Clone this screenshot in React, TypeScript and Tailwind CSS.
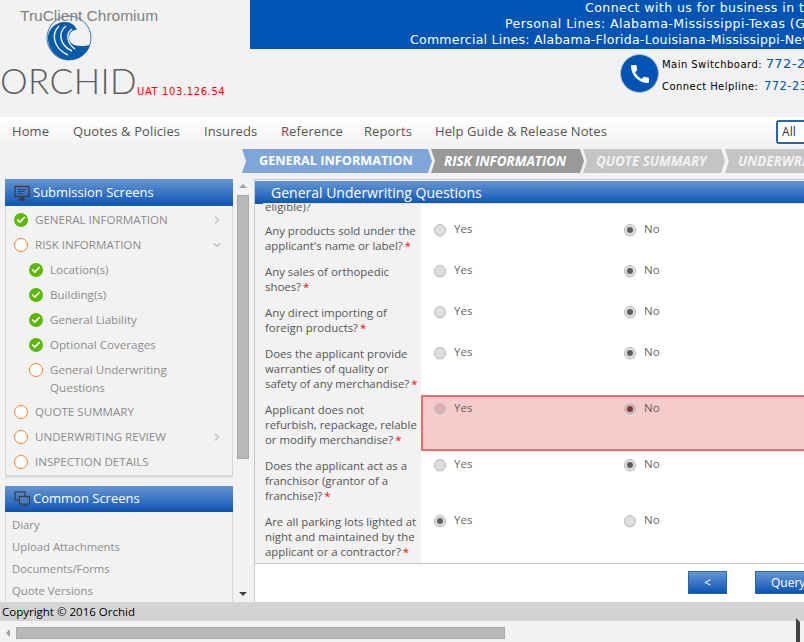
import { Check, ChevronRight, ChevronDown } from 'lucide-react';
import { MdCall } from 'react-icons/md';

const ui = "font-['Open_Sans','Noto_Sans',sans-serif]";
const verdana = "font-['DejaVu_Sans',sans-serif]";

const navItems = [
  { label: 'Home', cls: 'w-[61px]' },
  { label: 'Quotes & Policies', cls: 'w-[131px]' },
  { label: 'Insureds', cls: 'w-[77px]' },
  { label: 'Reference', cls: 'w-[83px]' },
  { label: 'Reports', cls: 'w-[71px]' },
  { label: 'Help Guide & Release Notes', cls: 'w-[172px]' },
];

type Question = { lines: string[]; value: 'yes' | 'no'; error?: boolean; h: string };

const questions: Question[] = [
  { lines: ["Any products sold under the", "applicant's name or label?"], value: 'no', h: 'h-[41px]' },
  { lines: ['Any sales of orthopedic', 'shoes?'], value: 'no', h: 'h-[41px]' },
  { lines: ['Any direct importing of', 'foreign products?'], value: 'no', h: 'h-[41px]' },
  { lines: ['Does the applicant provide', 'warranties of quality or', 'safety of any merchandise?'], value: 'no', h: 'h-[56px]' },
  { lines: ['Applicant does not', 'refurbish, repackage, relable', 'or modify merchandise?'], value: 'no', error: true, h: 'h-[56px]' },
  { lines: ['Does the applicant act as a', 'franchisor (grantor of a', 'franchise)?'], value: 'no', h: 'h-[56px]' },
  { lines: ['Are all parking lots lighted at', 'night and maintained by the', 'applicant or a contractor?'], value: 'yes', h: 'h-[56px]' },
];

function StatusDot({ done }: { done: boolean }) {
  if (done) {
    return (
      <span className="flex h-[14px] w-[14px] shrink-0 items-center justify-center rounded-full bg-[#5cb800]">
        <Check className="h-[10px] w-[10px] text-white" strokeWidth={4} />
      </span>
    );
  }
  return <span className="h-[14px] w-[14px] shrink-0 rounded-full border-[1.5px] border-[#f57f2a] bg-white" />;
}

function SideItem({ label, done, sub, arrow }: { label: string; done: boolean; sub?: boolean; arrow?: 'right' | 'down' }) {
  return (
    <div className={`flex h-[25px] items-center gap-[7px] pr-[9px] ${sub ? 'pl-[23px]' : 'pl-[8px]'}`}>
      <StatusDot done={done} />
      <span className="flex-1 whitespace-nowrap text-[11.6px] text-[#8c8c8c]">{label}</span>
      {arrow === 'right' && <ChevronRight className="h-[12px] w-[12px] text-[#c4c4c4]" strokeWidth={3} />}
      {arrow === 'down' && <ChevronDown className="h-[12px] w-[12px] text-[#c4c4c4]" strokeWidth={3} />}
    </div>
  );
}

function PanelHeader({ title, icon, h }: { title: string; icon: React.ReactNode; h: string }) {
  return (
    <div className={`flex items-center gap-[3px] bg-gradient-to-b from-[#6496d2] to-[#0554b4] pl-[9px] text-[13px] text-white ${h}`}>
      {icon}
      <span>{title}</span>
    </div>
  );
}

function Radio({ on, error }: { on: boolean; error?: boolean }) {
  return (
    <span className={`mt-[8px] flex h-[12px] w-[12px] shrink-0 items-center justify-center rounded-full border border-[#bdbdbd] shadow-[0_1px_1px_#e4e4e4] ${error ? 'bg-[#dcb0b0]' : 'bg-[#dedede]'}`}>
      {on && <span className={`h-[6px] w-[6px] rounded-full ${error ? 'bg-[#6e4040]' : 'bg-[#5e5e5e]'}`} />}
    </span>
  );
}

function Choice({ label, on, error }: { label: string; on: boolean; error?: boolean }) {
  return (
    <div className="flex w-[190px] shrink-0 gap-[8px]">
      <Radio on={on} error={error} />
      <span className={`pt-[5px] text-[11.5px] leading-[15px] ${error ? 'text-[#6e5a5a]' : 'text-[#666666]'}`}>{label}</span>
    </div>
  );
}

function ScrollArrow({ dir }: { dir: 'up' | 'down' | 'left' | 'right' }) {
  const shape = {
    up: 'border-x-[4px] border-b-[4px] border-x-transparent border-b-[#a0a0a0]',
    down: 'border-x-[4px] border-t-[4px] border-x-transparent border-t-[#444444]',
    left: 'border-y-[4px] border-r-[4px] border-y-transparent border-r-[#a0a0a0]',
    right: 'border-y-[4px] border-l-[4px] border-y-transparent border-l-[#444444]',
  }[dir];
  return <span className={`h-0 w-0 ${shape}`} />;
}

export default function App() {
  return (
    <div className={`flex h-[642px] w-[804px] flex-col overflow-hidden bg-[#f2f2f2] ${ui}`}>
      {/* header */}
      <div className="flex h-[117px] shrink-0">
        <div className="relative w-[250px] shrink-0">
          <svg viewBox="0 0 46 46" className="absolute left-[46px] top-[15px] h-[46px] w-[46px]">
            <circle cx="23" cy="23" r="22" fill="none" stroke="#0a5ca8" strokeWidth="0.8" />
            <path d="M2 25C1 15 9 7 19 7c6 0 10 3 12 8-4-1-8 3-8 8 0 6 7 10 21 7-3 9-11 15-21 15C12 45 3 36 2 25Z" fill="#0a5ca8" />
            <path d="M13 11C5 19 7 33 22 40M20 11c-8 6-7 19 6 25M26 14c-6 4-6 14 3 20" fill="none" stroke="#f2f2f2" strokeWidth="1.4" />
          </svg>
          <div className="absolute left-[20px] top-[4px] font-['Liberation_Sans',sans-serif] text-[15.5px] text-[#808080]">TruClient Chromium</div>
          <div className="absolute left-0 top-[59px] font-['Lato',sans-serif] text-[35px] font-light leading-[42px] tracking-[0.4px] text-[#5e5e5e]">ORCHID</div>
          <div className={`absolute left-[137px] top-[84px] text-[10px] tracking-[0.6px] text-[#ff0000] ${verdana}`}>UAT 103.126.54</div>
        </div>
        <div className="min-w-0 flex-1">
          <div className={`h-[49px] overflow-hidden bg-[#0054b4] text-[12.5px] leading-[16px] tracking-[0.45px] whitespace-nowrap text-white ${verdana}`}>
            <div className="pl-[335px]">Connect with us for business in the following states</div>
            <div className="pl-[255px]">Personal Lines: Alabama-Mississippi-Texas (Gulf)</div>
            <div className="pl-[160px] tracking-[0.25px]">Commercial Lines: Alabama-Florida-Louisiana-Mississippi-New Orleans</div>
          </div>
          <div className="flex pl-[370px] pt-[5px]">
            <span className="flex h-[39px] w-[39px] shrink-0 items-center justify-center rounded-full border border-[#b8c4d4] bg-[#0054b4]">
              <MdCall className="h-[24px] w-[24px] text-white" />
            </span>
            <div className={`ml-[3px] text-[10px] tracking-[0.45px] whitespace-nowrap text-black ${verdana}`}>
              <div className="mt-[1px] h-[22px] leading-[18px]">Main Switchboard: <span className="text-[13px] text-[#0054b4]">772-219-9393</span></div>
              <div className="leading-[18px]">Connect Helpline: <span className="ml-[2px] text-[11.5px] text-[#0054b4]">772-232-3434</span></div>
            </div>
          </div>
        </div>
      </div>

      {/* nav */}
      <div className="flex h-[30px] shrink-0 items-center bg-gradient-to-b from-[#ffffff] to-[#f2f2f2] pl-[12px] text-[13px] tracking-[0.1px] text-[#555555]">
        {navItems.map((item) => (
          <span key={item.label} className={`shrink-0 whitespace-nowrap ${item.cls}`}>{item.label}</span>
        ))}
        <div className="ml-[169px] mt-[-1px] flex h-[24px] w-[60px] shrink-0 items-center rounded-[3px] border-2 border-[#2a66b0] bg-white pl-[4px] text-[12px] text-[#333333]">All</div>
      </div>

      {/* steps */}
      <div className="mt-[2px] flex h-[24px] shrink-0 pl-[242px] text-[13.4px] font-bold whitespace-nowrap text-white">
        <div className="flex w-[190px] shrink-0 items-center bg-[#7fa6d8] pl-[17px] text-[12.7px] [clip-path:polygon(0_0,186px_0,190px_50%,186px_100%,0_100%,4px_50%)]">GENERAL INFORMATION</div>
        <div className="ml-[-1px] flex w-[153px] shrink-0 items-center bg-[#999999] pl-[13px] italic [clip-path:polygon(0_0,149px_0,153px_50%,149px_100%,0_100%,4px_50%)]">RISK INFORMATION</div>
        <div className="ml-[-1px] flex w-[142px] shrink-0 items-center bg-[#c4c4c4] pl-[13px] italic text-[#f2f2f2] [clip-path:polygon(0_0,138px_0,142px_50%,138px_100%,0_100%,4px_50%)]">QUOTE SUMMARY</div>
        <div className="flex w-[200px] shrink-0 items-center bg-[#c4c4c4] pl-[13px] italic text-[#f2f2f2] [clip-path:polygon(0_0,100%_0,100%_100%,0_100%,4px_50%)]">UNDERWRITING REVIEW</div>
      </div>

      {/* main */}
      <div className="mt-[6px] flex h-[423px] shrink-0 overflow-hidden">
        <div className="ml-[5px] w-[228px] shrink-0 overflow-hidden">
          <PanelHeader
            h="h-[27px]"
            title="Submission Screens"
            icon={
              <svg viewBox="0 0 16 16" className="h-[16px] w-[16px] text-[#3a3f46]" fill="none" stroke="currentColor" strokeWidth="1.4">
                <rect x="1" y="1.5" width="14" height="10" />
                <path d="M3.5 4.5h9M3.5 6.5h7M3.5 8.5h5" strokeWidth="1" />
                <path d="M6.5 12h3v2h-3zM4.5 15h7" fill="currentColor" />
              </svg>
            }
          />
          <div className="h-[270px] border-x border-b border-[#d8d8d8] pt-[1px] shadow-[0_1px_2px_#cccccc]">
            <SideItem label="GENERAL INFORMATION" done arrow="right" />
            <SideItem label="RISK INFORMATION" done={false} arrow="down" />
            <SideItem label="Location(s)" done sub />
            <SideItem label="Building(s)" done sub />
            <SideItem label="General Liability" done sub />
            <SideItem label="Optional Coverages" done sub />
            <div className="flex h-[42px] items-start gap-[7px] pl-[23px] pt-[5px] text-[11.6px] leading-[18px] text-[#8c8c8c]">
              <span className="mt-[1px] flex"><StatusDot done={false} /></span>
              <span className="mt-[-1px]">General Underwriting<br />Questions</span>
            </div>
            <SideItem label="QUOTE SUMMARY" done={false} />
            <SideItem label="UNDERWRITING REVIEW" done={false} arrow="right" />
            <SideItem label="INSPECTION DETAILS" done={false} />
          </div>
          <div className="mt-[10px]">
            <PanelHeader
              h="h-[26px]"
              title="Common Screens"
              icon={
                <svg viewBox="0 0 16 16" className="h-[16px] w-[16px] text-[#3a3f46]" fill="none" stroke="currentColor" strokeWidth="1.2">
                  <rect x="1" y="1" width="10" height="8" />
                  <rect x="5.5" y="5.5" width="10" height="7.5" fill="#4a7fc0" />
                  <path d="M9 14.5h3" strokeWidth="1.6" />
                </svg>
              }
            />
            <div className="border-x border-[#d8d8d8] pl-[6px] pt-[2px] text-[11.3px] leading-[22px] text-[#8c8c8c]">
              <div>Diary</div>
              <div>Upload Attachments</div>
              <div>Documents/Forms</div>
              <div>Quote Versions</div>
            </div>
          </div>
        </div>

        {/* sidebar scrollbar */}
        <div className="ml-[3px] flex w-[14px] shrink-0 flex-col items-center bg-[#f2f2f2] pt-[5px]">
          <ScrollArrow dir="up" />
          <div className="mt-[7px] h-[264px] w-[12px] shrink-0 border border-[#a8a8a8] bg-[#b8b8b8]" />
          <div className="mt-[130px] pt-[6px]"><ScrollArrow dir="down" /></div>
        </div>

        {/* questions */}
        <div className="ml-[4px] flex min-w-0 flex-1 flex-col border-l border-[#c8c8c8]">
          <div className="h-[2px] shrink-0 border-t border-[#c8c8c8]" />
          <div className="relative flex h-[23px] shrink-0 items-center bg-gradient-to-b from-[#6496d2] to-[#0554b4] pl-[16px] text-[14px] text-white">
            General Underwriting Questions
            <span className="absolute bottom-0 left-[8px] right-0 h-px bg-[#dfe8f3]" />
          </div>
          <div className="h-[359px] shrink-0 overflow-hidden bg-white">
            <div className="flex h-[12px] overflow-hidden">
              <div className="h-full w-[166px] shrink-0 overflow-hidden bg-[#f2f2f2] pl-[10px] text-[11.4px] leading-[15px] text-[#555555]">
                <div className="mt-[-5px]">eligible)?</div>
              </div>
            </div>
            {questions.map((q) => (
              <div key={q.lines[0]} className={`flex ${q.h}`}>
                <div className="w-[166px] shrink-0 bg-[#f2f2f2] pl-[10px] pt-[7px] text-[11.4px] leading-[15px] whitespace-nowrap text-[#555555]">
                  {q.lines.map((line, i) => (
                    <div key={line}>
                      {line}
                      {i === q.lines.length - 1 && <span className="ml-[2px] text-[#ff0000]">*</span>}
                    </div>
                  ))}
                </div>
                <div className={`flex flex-1 pl-[13px] ${q.error ? 'bg-[#f4cccc] shadow-[inset_0_0_0_2px_#f26b6b]' : ''}`}>
                  <Choice label="Yes" on={q.value === 'yes'} error={q.error} />
                  <Choice label="No" on={q.value === 'no'} error={q.error} />
                </div>
              </div>
            ))}
          </div>
          <div className="flex h-[39px] shrink-0 gap-[28px] border-t border-[#c8c8c8] bg-white pl-[433px] pt-[7px]">
            <button className="h-[23px] w-[39px] shrink-0 border border-[#2a66b0] bg-gradient-to-b from-[#6496d2] to-[#0554b4] text-[12px] text-white">&lt;</button>
            <button className="h-[23px] w-[80px] shrink-0 border border-[#2a66b0] bg-gradient-to-b from-[#6496d2] to-[#0554b4] pl-[15px] text-left text-[12px] text-white">Query</button>
          </div>
        </div>
      </div>

      {/* footer */}
      <div className="flex h-[19px] shrink-0 items-center bg-[#d4d4d4] pl-[2px] text-[11.5px] text-black">Copyright © 2016 Orchid</div>

      {/* page scrollbar */}
      <div className="flex flex-1 items-center bg-[#f2f2f2] pl-[6px] pr-[4px]">
        <ScrollArrow dir="left" />
        <div className="ml-[6px] h-[12px] w-[489px] border border-[#a8a8a8] bg-[#b8b8b8]" />
        <div className="ml-auto"><ScrollArrow dir="right" /></div>
      </div>
    </div>
  );
}
